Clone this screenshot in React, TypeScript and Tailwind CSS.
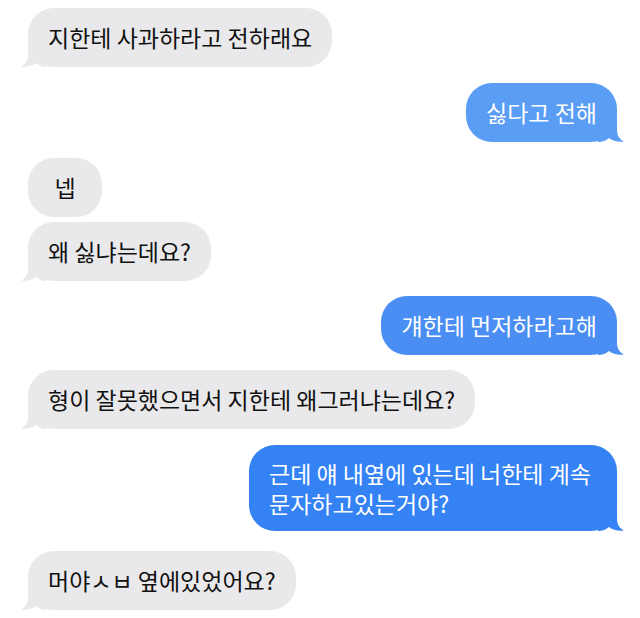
import React from 'react';

type Side = 'left' | 'right';

const Tail: React.FC<{ side: Side; color: string }> = ({ side, color }) => (
  <svg
    width="26"
    height="24"
    viewBox="0 0 26 24"
    className={side === 'left' ? 'absolute -left-[7px] bottom-0' : 'absolute -right-[7px] bottom-0 -scale-x-100'}
  >
    <path d="M7 0 L7 12 C7 18 4 21.5 0 23.6 C6 24.4 11 23 15 20 C18 22.6 21.5 24 26 24 L26 0 Z" fill={color} />
  </svg>
);

const Bubble: React.FC<{
  side: Side;
  color: string;
  tail?: boolean;
  className?: string;
  children: React.ReactNode;
}> = ({ side, color, tail = false, className = '', children }) => (
  <div className={`flex ${side === 'left' ? 'justify-start' : 'justify-end'}`}>
    <div
      className={`relative rounded-[26px] px-[20px] text-[23px] ${side === 'left' ? 'text-[#111]' : 'text-white'} ${className}`}
      style={{ backgroundColor: color }}
    >
      <span className="relative z-10">{children}</span>
      {tail && <Tail side={side} color={color} />}
    </div>
  </div>
);

const GRAY = '#e9e9eb';

export default function App() {
  return (
    <div
      className="w-[640px] h-[618px] bg-white overflow-hidden pt-[8px] pl-[28px] pr-[23px]"
      style={{ fontFamily: '"Noto Sans CJK KR", "Noto Sans", sans-serif' }}
    >
      <Bubble side="left" color={GRAY} tail className="py-[15px] leading-[29px]">지한테 사과하라고 전하래요</Bubble>
      <div className="mt-[16px]">
        <Bubble side="right" color="#5a9df4" tail className="py-[15px] leading-[29px]">싫다고 전해</Bubble>
      </div>
      <div className="mt-[16px]">
        <Bubble side="left" color={GRAY} className="py-[15px] leading-[29px] min-w-[74px] text-center">넵</Bubble>
      </div>
      <div className="mt-[5px]">
        <Bubble side="left" color={GRAY} tail className="py-[15px] leading-[29px]">왜 싫냐는데요?</Bubble>
      </div>
      <div className="mt-[15px]">
        <Bubble side="right" color="#4a8ef4" tail className="py-[15px] leading-[29px]">걔한테 먼저하라고해</Bubble>
      </div>
      <div className="mt-[15px]">
        <Bubble side="left" color={GRAY} tail className="py-[15px] leading-[29px]">형이 잘못했으면서 지한테 왜그러냐는데요?</Bubble>
      </div>
      <div className="mt-[16px]">
        <Bubble side="right" color="#3582f5" tail className="py-[13px] leading-[30px] min-w-[368px]">
          근데 얘 내옆에 있는데 너한테 계속
          <br />
          문자하고있는거야?
        </Bubble>
      </div>
      <div className="mt-[20px]">
        <Bubble side="left" color={GRAY} tail className="py-[15px] leading-[29px]">머야ㅅㅂ 옆에있었어요?</Bubble>
      </div>
    </div>
  );
}
